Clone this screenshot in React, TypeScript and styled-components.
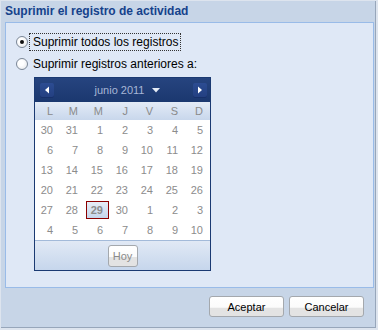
import styled, { createGlobalStyle } from "styled-components";

const GlobalStyle = createGlobalStyle`
  html, body {
    margin: 0;
    padding: 0;
    background: #dde4ee;
    font-family: "Liberation Sans", Arial, sans-serif;
  }
  * {
    box-sizing: border-box;
  }
`;

const weeks = [
  [30, 31, 1, 2, 3, 4, 5],
  [6, 7, 8, 9, 10, 11, 12],
  [13, 14, 15, 16, 17, 18, 19],
  [20, 21, 22, 23, 24, 25, 26],
  [27, 28, 29, 30, 1, 2, 3],
  [4, 5, 6, 7, 8, 9, 10],
];
const dayNames = ["L", "M", "M", "J", "V", "S", "D"];
const selectedWeek = 4;
const selectedDay = 2;

export default function App() {
  return (
    <>
      <GlobalStyle />
      <Window>
        <Title>Suprimir el registro de actividad</Title>
        <Panel>
          <RadioRow>
            <Radio checked />
            <RadioLabel focused>Suprimir todos los registros</RadioLabel>
          </RadioRow>
          <RadioRow>
            <Radio />
            <RadioLabel>Suprimir registros anteriores a:</RadioLabel>
          </RadioRow>
          <Calendar>
            <CalHeader>
              <NavButton>
                <svg width="14" height="14" viewBox="0 0 14 14">
                  <polygon points="5,7 9,3.5 9,10.5" fill="#fff" />
                </svg>
              </NavButton>
              <MonthLabel>
                junio 2011
                <svg width="8" height="5" viewBox="0 0 8 5">
                  <polygon points="0,0 8,0 4,4.5" fill="#e6ecf6" />
                </svg>
              </MonthLabel>
              <NavButton>
                <svg width="14" height="14" viewBox="0 0 14 14">
                  <polygon points="9,7 5,3.5 5,10.5" fill="#fff" />
                </svg>
              </NavButton>
            </CalHeader>
            <DayNames>
              {dayNames.map((d, i) => (
                <DayName key={i}>{d}</DayName>
              ))}
            </DayNames>
            <DayGrid>
              {weeks.map((week, w) =>
                week.map((day, d) =>
                  w === selectedWeek && d === selectedDay ? (
                    <DayCell key={`${w}-${d}`}>
                      <SelectedDay>{day}</SelectedDay>
                    </DayCell>
                  ) : (
                    <DayCell key={`${w}-${d}`}>{day}</DayCell>
                  )
                )
              )}
            </DayGrid>
            <CalFooter>
              <TodayButton>Hoy</TodayButton>
            </CalFooter>
          </Calendar>
        </Panel>
        <ButtonBar>
          <Button>Aceptar</Button>
          <Button>Cancelar</Button>
        </ButtonBar>
      </Window>
    </>
  );
}

const Window = styled.div`
  margin: 1px 0 0 1px;
  width: 375px;
  height: 327px;
  background: #c7d5e7;
  border-right: 1px solid #97a6ba;
  border-bottom: 1px solid #97a6ba;
  display: flex;
  flex-direction: column;
`;

const Title = styled.div`
  height: 21px;
  line-height: 21px;
  padding-left: 4px;
  font-size: 12px;
  font-weight: bold;
  color: #15428b;
`;

const Panel = styled.div`
  margin-left: 4px;
  width: 369px;
  height: 266px;
  background: #dfe8f6;
  border: 1px solid #99bbe8;
  padding: 10px 0 0 10px;
  display: flex;
  flex-direction: column;
  gap: 4px;
`;

const RadioRow = styled.div`
  display: flex;
  align-items: center;
  gap: 1px;
  height: 18px;
`;

const Radio = styled.span<{ checked?: boolean }>`
  width: 12px;
  height: 12px;
  border-radius: 50%;
  border: 1px solid #7b8797;
  background: radial-gradient(circle at 40% 40%, #ffffff 30%, #dfe2e6 100%);
  display: flex;
  align-items: center;
  justify-content: center;
  &::after {
    content: "";
    width: 4px;
    height: 4px;
    border-radius: 50%;
    background: ${(p) => (p.checked ? "#111" : "transparent")};
  }
`;

const RadioLabel = styled.span<{ focused?: boolean }>`
  height: 18px;
  line-height: 16px;
  padding: 0 2px 0 3px;
  font-size: 12px;
  color: #000;
  border: 1px dotted ${(p) => (p.focused ? "#333" : "transparent")};
`;

const Calendar = styled.div`
  margin-left: 18px;
  width: 177px;
  border: 1px solid #1b3a72;
  background: #fff;
  display: flex;
  flex-direction: column;
`;

const CalHeader = styled.div`
  height: 24px;
  background: linear-gradient(#26447f, #1b386f);
  display: flex;
  align-items: center;
  justify-content: space-between;
  padding: 0 3px 0 5px;
`;

const NavButton = styled.span`
  width: 14px;
  height: 15px;
  border-radius: 2px;
  background: linear-gradient(#2c4c92, #233f80);
  box-shadow: inset 0 -1px 0 #17306a;
  display: flex;
  align-items: center;
  justify-content: center;
`;

const MonthLabel = styled.span`
  display: flex;
  align-items: center;
  gap: 8px;
  font-size: 11px;
  color: #a7b6d6;
  padding-left: 8px;
`;

const DayNames = styled.div`
  display: grid;
  grid-template-columns: repeat(7, 25px);
  height: 18px;
  background: linear-gradient(#e3ebf6, #c8d7ec);
`;

const DayName = styled.span`
  font-size: 11px;
  line-height: 18px;
  color: #8a8a8a;
  text-align: right;
  padding-right: 7px;
`;

const DayGrid = styled.div`
  display: grid;
  grid-template-columns: repeat(7, 25px);
  grid-auto-rows: 20px;
  border-bottom: 1px solid #a3bad9;
`;

const DayCell = styled.span`
  font-size: 11px;
  line-height: 20px;
  color: #8c8c8c;
  text-align: right;
  padding-right: 7px;
  display: flex;
  justify-content: flex-end;
`;

const SelectedDay = styled.span`
  margin: 1px -6px 1px 0;
  width: 23px;
  height: 18px;
  line-height: 16px;
  border: 1px solid #8b0000;
  background: linear-gradient(#e6edf7, #c5d5eb);
  font-weight: bold;
  text-align: right;
  padding-right: 5px;
`;

const CalFooter = styled.div`
  height: 29px;
  background: linear-gradient(#e1e9f5, #c6d6ec);
  display: flex;
  align-items: center;
  justify-content: center;
`;

const Button = styled.button`
  width: 75px;
  height: 21px;
  padding: 0;
  border: 1px solid #a4a8ad;
  border-radius: 3px;
  background: linear-gradient(#ffffff 0%, #fbfbfb 55%, #e3e3e3 56%, #e3e3e3 100%);
  font-family: "Liberation Sans", Arial, sans-serif;
  font-size: 11px;
  color: #000;
`;

const TodayButton = styled(Button)`
  width: 30px;
  height: 22px;
  color: #8a8a8a;
  font-size: 11px;
`;

const ButtonBar = styled.div`
  display: flex;
  justify-content: flex-end;
  gap: 5px;
  padding: 8px 11px 0 0;
`;
